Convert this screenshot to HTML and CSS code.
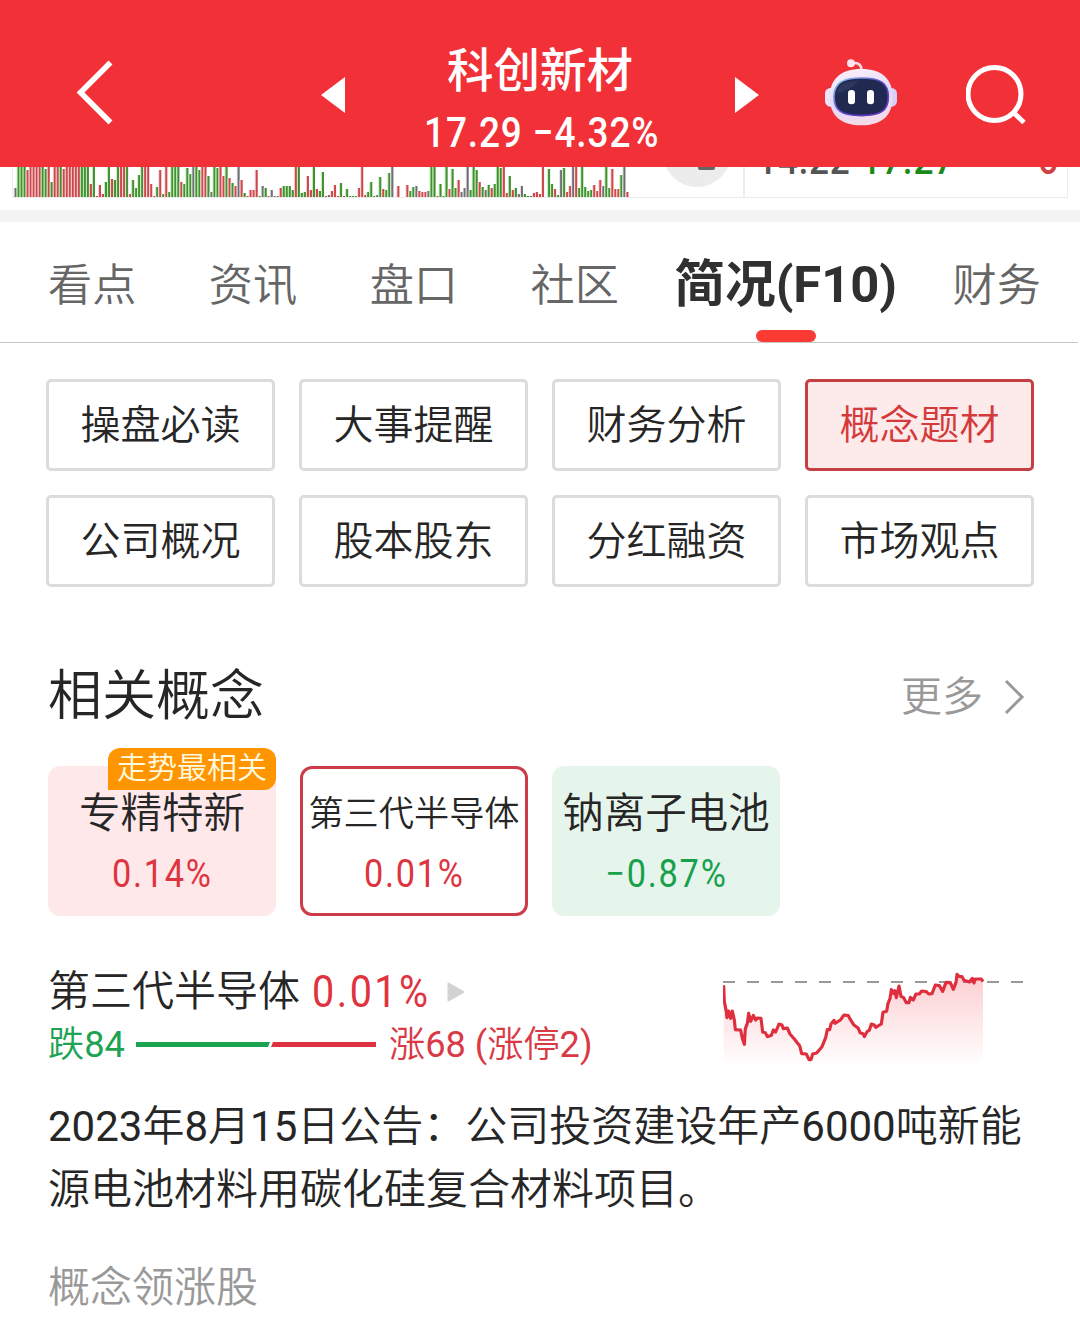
FILE: index.html
```html
<!DOCTYPE html>
<html lang="zh-CN">
<head>
    <meta charset="UTF-8">
    <meta name="viewport" content="width=device-width, initial-scale=1.0">
    <title>科创新材</title>
    <link rel="stylesheet" href="styles.css">
</head>
<body>
    <header class="header">
        <svg class="back" width="38" height="66" viewBox="0 0 38 66"><path d="M34.5 2.5 L4.5 32.5 L34.5 62.5" fill="none" stroke="#fff" stroke-width="5.5"/></svg>
        <svg class="prev" width="24" height="36" viewBox="0 0 24 36"><path d="M24 0V36L0 18Z" fill="#fff"/></svg>
        <div class="stock">
            <h1>科创新材</h1>
            <p><span class="din">17.29 −4.32%</span></p>
        </div>
        <svg class="next" width="24" height="36" viewBox="0 0 24 36"><path d="M0 0V36L24 18Z" fill="#fff"/></svg>
        <svg class="robot" width="72" height="67" viewBox="75 56 216 201">
            <defs>
                <linearGradient id="shell" x1="0" y1="0" x2="0.3" y2="1">
                    <stop offset="0" stop-color="#fff3f8"/>
                    <stop offset="0.6" stop-color="#e2d9fa"/>
                    <stop offset="1" stop-color="#f2dcec"/>
                </linearGradient>
                <linearGradient id="rim" x1="0" y1="0" x2="1" y2="1">
                    <stop offset="0" stop-color="#8fd0f5"/>
                    <stop offset="0.5" stop-color="#5a45c8"/>
                    <stop offset="1" stop-color="#6534c4"/>
                </linearGradient>
            </defs>
            <path d="M154 70C172 64 186 72 184 92" fill="none" stroke="#fbd9e6" stroke-width="8"/>
            <circle cx="153" cy="69" r="12" fill="#fde4ee"/>
            <rect x="75" y="143" width="36" height="56" rx="16" fill="#ede3f9"/>
            <rect x="255" y="143" width="36" height="56" rx="16" fill="#d9cef8"/>
            <path d="M184 86C245 86 278 116 278 170C278 226 245 255 184 255C123 255 89 226 89 170C89 116 123 86 184 86Z" fill="url(#shell)"/>
            <path d="M184 113C242 113 265 129 265 169C265 211 242 226 184 226C126 226 102 211 102 169C102 129 126 113 184 113Z" fill="#20294f" stroke="url(#rim)" stroke-width="5"/>
            <path d="M112 158C114 132 130 124 174 121C160 142 140 151 112 158Z" fill="#3c4670" opacity="0.5"/>
            <rect x="144" y="149" width="21" height="43" rx="10" fill="#fff"/>
            <rect x="201" y="149" width="21" height="43" rx="10" fill="#fff"/>
        </svg>
        <svg class="search" width="62" height="62" viewBox="0 0 62 62"><circle cx="28.5" cy="30" r="26.5" fill="none" stroke="#fff" stroke-width="5"/><path d="M47 48L58 58.500" stroke="#fff" stroke-width="5"/></svg>
    </header>

    <section class="quote">
        <svg class="volume" width="731" height="31"></svg>
        <div class="zoom-out"></div>
        <div class="tick">
            <span class="din time">14:22</span>
            <span class="din price">17.27</span>
            <span class="din hand">6</span>
        </div>
    </section>

    <nav class="tabs">
        <a>看点</a>
        <a>资讯</a>
        <a>盘口</a>
        <a>社区</a>
        <a class="active">简况(F10)</a>
        <a>财务</a>
    </nav>

    <main>
        <div class="menu">
            <a>操盘必读</a>
            <a>大事提醒</a>
            <a>财务分析</a>
            <a class="active">概念题材</a>
            <a>公司概况</a>
            <a>股本股东</a>
            <a>分红融资</a>
            <a>市场观点</a>
        </div>

        <div class="title-row">
            <h2>相关概念</h2>
            <span class="more">更多
                <svg width="22" height="36" viewBox="0 0 22 36"><path d="M3 2L19 18L3 34" fill="none" stroke="#999" stroke-width="3"/></svg>
            </span>
        </div>

        <div class="cards">
            <div class="card up">
                <span class="badge">走势最相关</span>
                <h3>专精特新</h3>
                <p><span class="din">0.14%</span></p>
            </div>
            <div class="card selected">
                <h3>第三代半导体</h3>
                <p><span class="din">0.01%</span></p>
            </div>
            <div class="card down">
                <h3>钠离子电池</h3>
                <p><span class="din">−0.87%</span></p>
            </div>
        </div>

        <div class="detail">
            <div>
                <div class="name">
                    第三代半导体
                    <span class="rate"><span class="din">0.01%</span></span>
                    <svg width="18" height="20" viewBox="0 0 18 20"><path d="M1.500 1.500V18.500L16.500 10Z" fill="#d2d2d2" stroke="#d2d2d2" stroke-width="2" stroke-linejoin="round"/></svg>
                </div>
                <div class="ratio">
                    <span class="fall">跌<b>84</b></span>
                    <i class="bar-fall"></i>
                    <i class="bar-rise"></i>
                    <span class="rise">涨<b>68 (</b>涨停<b>2)</b></span>
                </div>
            </div>
            <svg class="trend" width="300" height="100" viewBox="69 60 900 300">
                <defs>
                    <linearGradient id="area" x1="0" y1="0" x2="0" y2="1">
                        <stop offset="0" stop-color="#f5323c" stop-opacity="0.24"/>
                        <stop offset="1" stop-color="#f5323c" stop-opacity="0"/>
                    </linearGradient>
                </defs>
                <path d="M69 96H969" stroke="#999" stroke-width="6" stroke-dasharray="36 36"/>
                <path class="fill" fill="url(#area)"/>
                <path class="line" fill="none" stroke="#df2f3e" stroke-width="9.500" stroke-linejoin="round"/>
            </svg>
        </div>

        <p class="desc"><b>2023</b>年<b>8</b>月<b>15</b>日公告：公司投资建设年产<b>6000</b>吨新能源电池材料用碳化硅复合材料项目。</p>
        <h4>概念领涨股</h4>
    </main>

    <script>
    // r = up, g = down, k = flat, number is the bar height
    let volumes = "k10 g31 g31 g31 r28 r31 r31 r31 r31 g31 g29 r31 g16 r31 r31 g31 r29 r31 r31 r31 r31 r31 g31 g31 g31 r14 g31 r2 r13 r4 g16 g31 r19 g18 g31 r31 r31 g31 r4 g18 g10 g23 g31 r31 r31 r14 r2 g11 r28 g4 r31 g6 g31 g31 g31 r16 g14 g30 g24 k31 g31 g28 r31 r31 g22 k6 g31 g30 r31 r22 g31 r20 g15 r12 k31 r18 g5 r2 r8 r8 r28 g2 k12 g10 r2 k8 k2 k2 r10 g12 g12 g12 g8 r31 g31 g5 g6 r22 r8 g31 r9 g7 g26 r2 k3 r7 r13 r2 g15 r2 g9 g2 g2 g2 r10 r31 r3 g6 g16 g2 k3 g21 r9 g8 g25 k31 r1 r12 k0 k1 r13 g7 g11 k12 r7 r6 r6 k7 g31 g31 r2 g14 g2 g31 r9 g29 g10 r18 k6 k10 k31 g8 g31 g28 r16 g11 k8 g13 r10 g14 g31 g30 r31 r5 g22 r8 g10 k4 k12 g4 g2 k2 r5 r6 r4 r31 g1 g29 g14 r9 g3 k28 g30 r6 r12 k31 r31 g10 g31 g11 g7 g8 r13 r7 r18 k12 g31 g10 r29 r9 r9 g23 k31 r6".split(" ");
    let colors = { r: "#c9494d", g: "#439034", k: "#707074" };
    let glow = { r: "#fbd3d3", g: "#c5ecb9", k: "#e3e3e6" };

    let bars = "";
    volumes.forEach((v, i) => {
        let h = Number(v.slice(1));
        let x = (i * 3.014 + 0.6).toFixed(2);
        bars += `<rect x="${x}" y="${31 - h}" width="3" height="${h}" fill="${glow[v[0]]}"/>`;
        bars += `<rect x="${Number(x) + 1}" y="${31 - h}" width="2" height="${h}" fill="${colors[v[0]]}"/>`;
    });
    document.querySelector(".volume").innerHTML = bars;

    // intraday trend
    let points = "71,106 73,155 79,185 81,203 86,183 92,205 97,183 103,210 106,239 122,240 127,265 133,283 136,236 142,220 146,190 152,214 160,196 167,210 172,204 183,205 188,246 196,248 202,260 214,256 220,240 227,246 237,222 246,225 250,236 262,234 270,252 283,267 299,287 305,311 319,312 327,329 333,329 338,312 350,309 366,290 377,263 382,239 389,239 393,222 402,211 405,220 421,210 432,195 445,197 449,205 461,224 475,235 480,248 489,251 493,260 502,244 508,241 514,222 523,225 527,232 544,222 549,187 560,184 564,160 570,146 574,119 580,130 584,122 589,143 597,108 603,139 611,143 619,158 627,158 631,142 640,150 648,132 658,132 665,123 679,125 686,132 696,131 706,105 718,107 728,124 738,97 751,98 760,118 768,97 771,73 777,79 786,80 792,91 808,96 817,85 822,99 826,87 844,87 849,95";
    document.querySelector(".trend .line").setAttribute("d", "M" + points);
    document.querySelector(".trend .fill").setAttribute("d", "M" + points + " 849,350 71,350Z");
    </script>
</body>
</html>
```

FILE: styles.css
```css
*{
    margin: 0;
    padding: 0;
    box-sizing: border-box;
}
body{
    width: 1080px;
    height: 1327px;
    overflow: hidden;
    background-color: #fff;
    color: #262626;
    font-family: Roboto, "Noto Sans CJK SC", sans-serif;
    font-weight: 350;
}
h1, h2, h3, h4{
    font-weight: 350;
}
b{
    font-weight: 400;
}
svg{
    display: block;
    flex: none;
}
/* narrow digits */
.din{
    display: inline-block;
    transform: scaleX(0.88);
    font-weight: 400;
    letter-spacing: 2px;
    white-space: nowrap;
}

.header{
    height: 167px;
    padding: 23px 54px 0 76px;
    display: grid;
    grid-template-columns: 245px 24px 390px 90px 141px 62px;
    align-items: center;
    background-color: #f23037;
    color: #fff;
}
.back, .robot{
    margin-top: -5px;
}
.stock{
    text-align: center;
    margin-top: 13px;
}
.stock h1{
    font-size: 46.5px;
    line-height: 62px;
    font-weight: 500;
}
.stock p{
    padding-left: 4px;
    font-size: 42px;
    line-height: 62px;
}
.stock .din{
    font-weight: 500;
    letter-spacing: 1px;
}

.quote{
    height: 55px;
    padding-left: 12px;
    display: flex;
    position: relative;
    overflow: hidden;
    border-bottom: 12px solid #f4f4f4;
}
.volume{
    height: 31px;
    border-left: 1px solid #eee;
    border-bottom: 1px solid #ececec;
}
.zoom-out{
    position: absolute;
    left: 663px;
    top: -48px;
    width: 68px;
    height: 68px;
    border-radius: 50%;
    background-color: #ececec;
}
.zoom-out::after{
    content: "";
    position: absolute;
    left: 35px;
    bottom: 17px;
    width: 17px;
    height: 6px;
    border-radius: 2px;
    background-color: #666;
}
.tick{
    width: 325px;
    height: 31px;
    display: flex;
    padding: 0 5px 0 12px;
    border: 1px solid #ececec;
    border-left-width: 2px;
    border-top: 0;
    font-size: 40px;
    line-height: 44px;
}
.tick .din{
    margin-top: -28px;
    transform-origin: left;
    font-weight: 500;
    letter-spacing: 1px;
}
.time{
    width: 104px;
    color: #555;
}
.price{
    color: #1a8a1a;
}
.hand{
    margin-left: auto;
    color: #cf4040;
}

.tabs{
    width: 1078px;
    height: 121px;
    padding: 0 37px 0 48px;
    display: flex;
    justify-content: space-between;
    border-bottom: 1px solid #c8c8c8;
    font-size: 44.2px;
    line-height: 128px;
    color: #666;
}
.tabs .active{
    position: relative;
    margin: 0 -17px 0 -17px;
    font-size: 50.7px;
    line-height: 126px;
    font-weight: 700;
    color: #303030;
}
.tabs .active::after{
    content: "";
    position: absolute;
    left: 50%;
    bottom: 0;
    width: 60px;
    height: 12px;
    margin-left: -30px;
    border-radius: 6px;
    background-color: #fb3a33;
}

main{
    padding: 36px 48px 0;
}
.menu{
    margin: 0 -2px;
    display: grid;
    grid-template-columns: repeat(4, 229px);
    gap: 24px;
}
.menu a{
    height: 92px;
    border: 3px solid #dcdcdc;
    border-radius: 5px;
    font-size: 40px;
    line-height: 88px;
    text-align: center;
}
.menu .active{
    border-color: #c44043;
    background-color: #fdeaeb;
    color: #d53a3b;
}

.title-row{
    height: 80px;
    margin-top: 68px;
    padding-top: 4px;
    display: flex;
    align-items: center;
    justify-content: space-between;
    line-height: 76px;
}
.title-row h2{
    font-size: 54px;
}
.more{
    display: flex;
    align-items: center;
    gap: 20px;
    padding-right: 7px;
    font-size: 41px;
    color: #999;
}

.cards{
    margin-top: 31px;
    display: grid;
    grid-template-columns: repeat(3, 228px);
    gap: 24px;
}
.card{
    position: relative;
    height: 150px;
    padding-top: 18px;
    border-radius: 12px;
    text-align: center;
    white-space: nowrap;
}
.card h3{
    font-size: 41.5px;
    line-height: 60px;
}
.card p{
    font-size: 39px;
    line-height: 60px;
    color: #dd3440;
}
.up{
    background-color: #ffe8ea;
}
.selected{
    padding-top: 15px;
    border: 3px solid #cc3c48;
}
.selected h3{
    margin: 0 -6px;
    font-size: 35.2px;
}
.down{
    background-color: #e6f5ec;
}
.down p{
    color: #18a04c;
}
.badge{
    position: absolute;
    right: 0;
    top: -18px;
    width: 168px;
    height: 42px;
    border-radius: 12px 12px 12px 0;
    background-color: #ff9500;
    color: #fffbe0;
    font-size: 30px;
    line-height: 40px;
}

.detail{
    margin-top: 45px;
    height: 110px;
    display: flex;
    justify-content: space-between;
}
.trend{
    margin: 9px 9px 0 0;
}
.name{
    height: 62px;
    display: flex;
    align-items: center;
    font-size: 42px;
    line-height: 62px;
}
.rate{
    width: 135px;
    margin-left: 12px;
    font-size: 45px;
    color: #df3340;
}
.rate .din{
    transform-origin: left;
    letter-spacing: 2.8px;
}
.ratio{
    height: 43px;
    display: flex;
    align-items: center;
    font-size: 36.2px;
    line-height: 43px;
}
.fall{
    width: 88px;
    color: #1ea355;
}
.rise{
    margin-left: 13px;
    color: #d93a46;
}
.bar-fall, .bar-rise{
    height: 5px;
}
.bar-fall{
    width: 134px;
    background-color: #1aa351;
    clip-path: polygon(0 0, 100% 0, 132px 100%, 0 100%);
}
.bar-rise{
    width: 106px;
    background-color: #dd3040;
    clip-path: polygon(3px 0, 100% 0, 100% 100%, 1px 100%);
}

.desc{
    margin: 24px -4px 0 0;
    font-size: 42px;
    line-height: 63px;
}
h4{
    margin-top: 36px;
    font-size: 42px;
    line-height: 62px;
    color: #999;
}
```
